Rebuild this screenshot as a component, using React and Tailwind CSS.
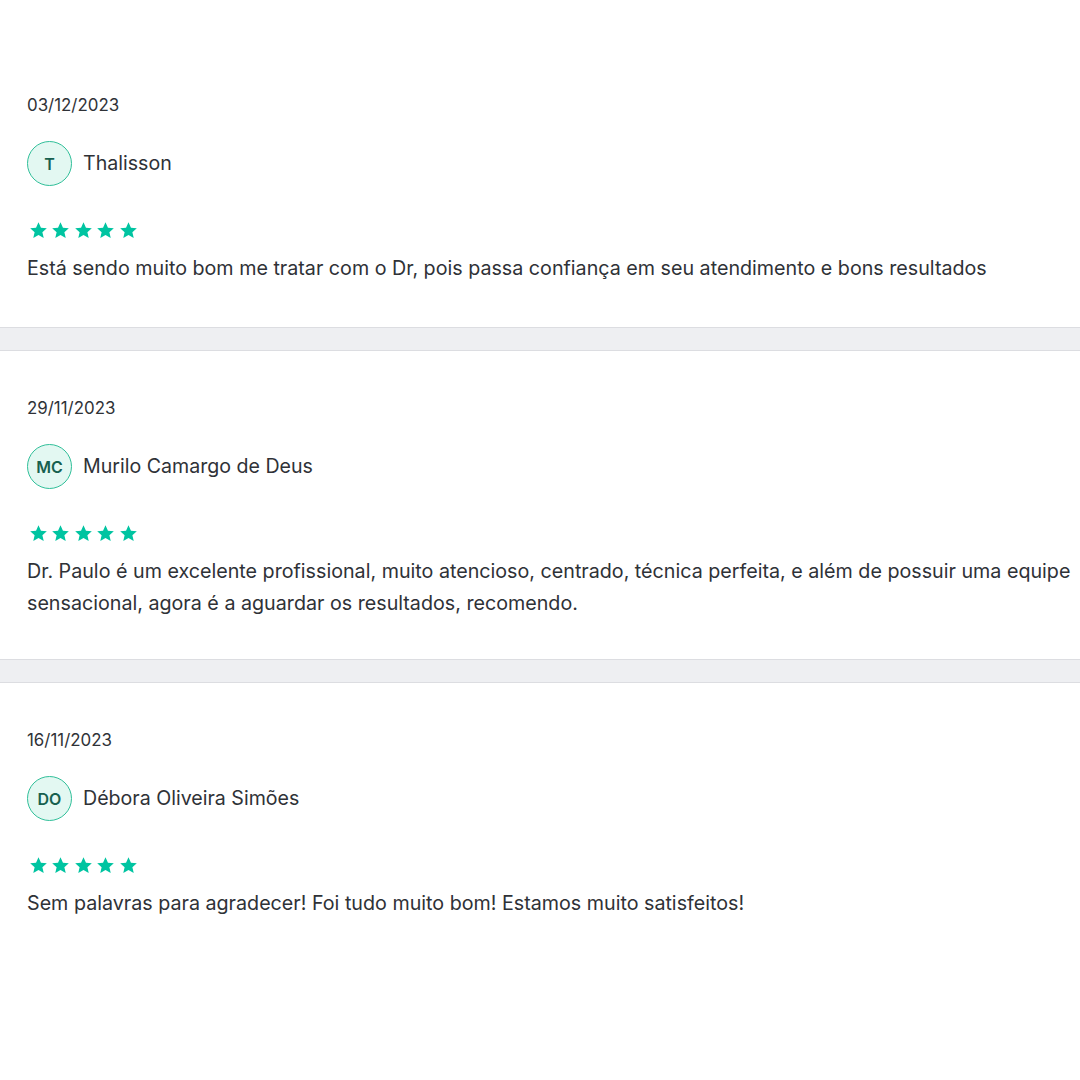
import React from "react";

const reviews = [
  { date: "03/12/2023", initials: "T", name: "Thalisson", text: "Está sendo muito bom me tratar com o Dr, pois passa confiança em seu atendimento e bons resultados" },
  { date: "29/11/2023", initials: "MC", name: "Murilo Camargo de Deus", text: "Dr. Paulo é um excelente profissional, muito atencioso, centrado, técnica perfeita, e além de possuir uma equipe sensacional, agora é a aguardar os resultados, recomendo." },
  { date: "16/11/2023", initials: "DO", name: "Débora Oliveira Simões", text: "Sem palavras para agradecer! Foi tudo muito bom! Estamos muito satisfeitos!" },
];

function Star() {
  return (
    <svg width="19" height="19" viewBox="0 0 24 24" fill="#00c4a1">
      <path d="M12 1.5l3.1 6.9 7.4.7-5.6 5 1.7 7.4L12 17.6 5.4 21.5l1.7-7.4-5.6-5 7.4-.7z" />
    </svg>
  );
}

function Review({ r, first }) {
  return (
    <div className={`bg-white pl-[27px] pr-[2px] ${first ? "pt-[93px] pb-[43px]" : "pt-[45px] pb-[40px]"}`}>
      <div className="text-[16.9px] leading-[24px] text-[#2f3237]">{r.date}</div>
      <div className="mt-[24px] flex items-center gap-[11px]">
        <div className="w-[45px] h-[45px] rounded-full border-[1.5px] border-[#30bf99] bg-[#e3f8f2] flex items-center justify-center text-[16px] font-semibold text-[#17604f]">
          {r.initials}
        </div>
        <div className="text-[19.6px] text-[#2f3237]">{r.name}</div>
      </div>
      <div className="mt-[35px] flex gap-[3.4px] pl-[2px]">
        {[0, 1, 2, 3, 4].map((i) => <Star key={i} />)}
      </div>
      <p className="mt-[12px] text-[19.7px] leading-[32px] text-[#2f3237]">{r.text}</p>
    </div>
  );
}

function Sep() {
  return <div className="h-[24px] bg-[#eeeff2] border-y border-[#dcdde1]" />;
}

export default function App() {
  return (
    <div className="w-[1080px] h-[1080px] bg-white overflow-hidden" style={{ fontFamily: "Inter, 'Noto Sans', sans-serif" }}>
      <Review r={reviews[0]} first />
      <Sep />
      <Review r={reviews[1]} />
      <Sep />
      <Review r={reviews[2]} />
    </div>
  );
}
